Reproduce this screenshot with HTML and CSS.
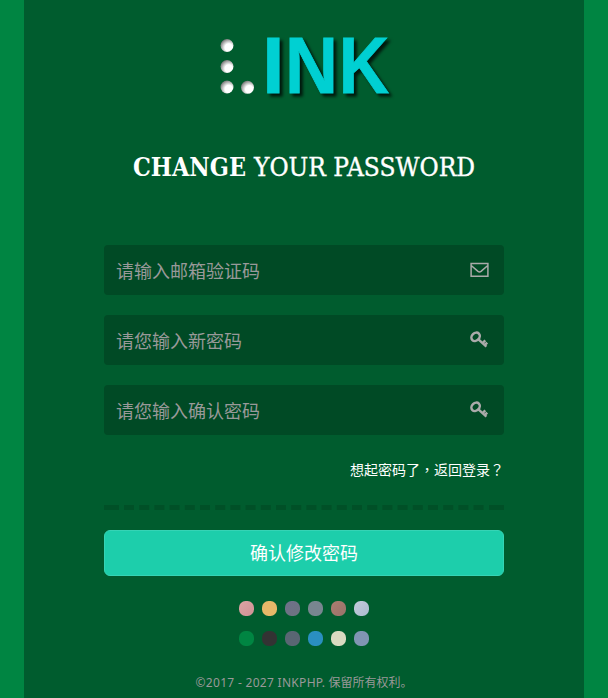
FILE: index.html
```
<!DOCTYPE html>
<html lang="zh-CN">
<head>
<meta charset="utf-8">
<title>Change your password</title>
<link rel="stylesheet" href="styles.css">
</head>
<body>
<main class="panel">
  <svg class="logo" width="180" height="70" viewBox="0 0 180 70" role="img" aria-label="LINK">
    <defs>
      <radialGradient id="ball" cx=".64" cy=".66" r=".74">
        <stop offset=".4" stop-color="#fff"/>
        <stop offset=".7" stop-color="#b5b5b5"/>
        <stop offset="1" stop-color="#666"/>
      </radialGradient>
    </defs>
    <g fill="url(#ball)">
      <circle cx="13" cy="15.5" r="6.5"/>
      <circle cx="13" cy="36.5" r="6.5"/>
      <circle cx="13" cy="57" r="6.5"/>
      <circle cx="33.5" cy="57.3" r="6.5"/>
    </g>
    <g class="logo-text">
      <text x="48.3" y="63">I</text>
      <text x="71" y="63" textLength="53" lengthAdjust="spacingAndGlyphs">N</text>
      <text x="124.8" y="63" textLength="50.5" lengthAdjust="spacingAndGlyphs">K</text>
    </g>
  </svg>
  <h1 class="title"><svg width="344" height="40" viewBox="0 0 344 40"><text x="1" y="28" textLength="113" lengthAdjust="spacingAndGlyphs" class="strong">CHANGE</text><text x="122" y="28" textLength="221" lengthAdjust="spacingAndGlyphs">YOUR PASSWORD</text></svg></h1>
  <form class="form">
    <label class="field">
      <input type="text" placeholder="请输入邮箱验证码">
      <svg width="20" height="20" viewBox="0 0 20 20"><path d="M1.1 3.6h16.8v12.6H1.1zM1.5 5.7l6.5 5.6q1.5 1.2 3 0L17.5 5.7" fill="none" stroke="#aaa" stroke-width="1.5"/></svg>
    </label>
    <label class="field">
      <input type="text" placeholder="请您输入新密码">
      <svg width="20" height="20" viewBox="0 0 20 20"><use href="#key"/></svg>
    </label>
    <label class="field">
      <input type="text" placeholder="请您输入确认密码">
      <svg width="20" height="20" viewBox="0 0 20 20"><g id="key" fill="none" stroke="#aaa"><ellipse cx="5.6" cy="6.8" rx="4.6" ry="3.7" transform="rotate(-45 5.6 6.8)" stroke-width="2.5"/><path d="M8.4 9.3l8 7.4M12.6 13.2l2.7-2.8M14.7 15.2l2.5-2.6" stroke-width="2.4"/></g></svg>
    </label>
    <a class="back">想起密码了<span class="punct" lang="zh-TW">，</span>返回登录<span class="punct" lang="zh-TW">？</span></a>
    <svg class="divider" width="400" height="5" viewBox="0 0 400 5"><path d="M0 2.5h15M385 2.5h15"/><path d="M20 2.5h361" stroke-dasharray="10 5.2"/></svg>
    <button class="submit" type="button">确认修改密码</button>
  </form>
  <div class="swatches">
    <i class="dot rose"></i><i class="dot amber"></i><i class="dot plum"></i><i class="dot steel"></i><i class="dot clay"></i><i class="dot ice"></i>
    <i class="dot green"></i><i class="dot black"></i><i class="dot slate"></i><i class="dot blue"></i><i class="dot cream"></i><i class="dot lavender"></i>
  </div>
  <footer class="copyright"><span class="latin">©2017 - 2027 INKPHP.</span> 保留所有权利。</footer>
</main>
</body>
</html>
```
FILE: styles.css
```
* { box-sizing: border-box; }
body {
  margin: 0;
  height: 698px;
  overflow: hidden;
  background: #008542;
  font-family: "Noto Sans", "Noto Sans CJK SC", sans-serif;
}
.panel {
  width: 560px;
  height: 698px;
  margin: 0 auto;
  padding: 30px 80px 0;
  background: #005c2e;
  display: flex;
  flex-direction: column;
  align-items: center;
}
.logo { display: block; overflow: visible; }
.logo-text {
  font: bold 80px "Liberation Sans", sans-serif;
  fill: #00d0d2;
  stroke: #00d0d2;
  stroke-width: .8px;
  filter: drop-shadow(3px 3px 1.5px rgba(0, 0, 0, .75));
}
.title {
  margin: 48px 0 0;
  height: 97px;
  font: 400 26px "Roboto Slab", "DejaVu Serif", serif;
}
.title svg { display: block; overflow: visible; }
.title text { fill: #fff; stroke: #fff; stroke-width: .4px; }
.title .strong { font-weight: 700; stroke: none; }
.form { width: 400px; display: flex; flex-direction: column; }
.field {
  height: 50px;
  margin-bottom: 20px;
  padding: 0 14px 0 12px;
  display: flex;
  align-items: center;
  border-radius: 4px;
  background: #004a25;
}
.field input {
  flex: 1;
  min-width: 0;
  height: 50px;
  padding: 0 0 1px;
  border: 0;
  outline: 0;
  background: transparent;
  color: #aaa;
  font: 18px "Noto Sans CJK SC", sans-serif;
}
.field input::placeholder { color: #999; opacity: 1; }
.back {
  align-self: flex-end;
  height: 30px;
  line-height: 28px;
  color: #fff;
  font-size: 14px;
  font-family: "Noto Sans CJK SC", sans-serif;
}
.punct { font-family: "Noto Sans CJK TC", sans-serif; }
.divider { display: block; margin: 20px 0; }
.divider path { stroke: #005027; stroke-width: 5px; }
.submit {
  height: 46px;
  padding: 0 0 2px;
  border: 1px solid #35d4b5;
  border-radius: 6px;
  background: #1dceab;
  color: #fff;
  font: 18px "Noto Sans CJK SC", sans-serif;
}
.swatches {
  margin-top: 25px;
  display: grid;
  grid-template-columns: repeat(6, 15px);
  gap: 15px 8px;
}
.dot { width: 15px; height: 15px; border-radius: 6.5px; }
.rose { background: linear-gradient(135deg, #dca4a4, #cf9296); }
.amber { background: #e7b869; }
.plum { background: linear-gradient(135deg, #70708a, #6c7480); }
.steel { background: #788690; }
.clay { background: linear-gradient(135deg, #ad7d70, #98736a); }
.ice { background: linear-gradient(135deg, #c4cbdc, #aabbcf); }
.green { background: #008542; }
.black { background: #333; }
.slate { background: #596673; }
.blue { background: #2a8fc0; }
.cream { background: #d9dac1; }
.lavender { background: #8095b3; }
.copyright {
  margin-top: 27px;
  height: 20px;
  line-height: 20px;
  color: #999;
  font-size: 12px;
  white-space: nowrap;
}
.latin { letter-spacing: .3px; }
```
